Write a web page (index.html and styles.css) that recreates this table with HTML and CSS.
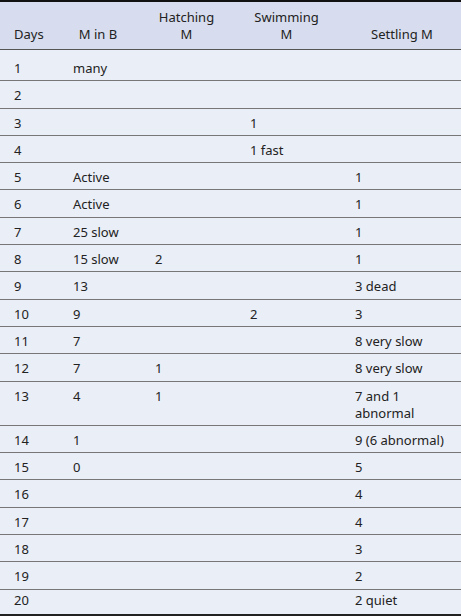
FILE: index.html
```html
<!DOCTYPE html>
<html>
<head>
<meta charset="utf-8">
<link rel="stylesheet" href="styles.css">
</head>
<body>
<table class="data">
  <colgroup>
    <col class="c1"><col class="c2"><col class="c3"><col class="c4"><col class="c5">
  </colgroup>
  <thead>
    <tr><th>Days</th><th>M in B</th><th>Hatching M</th><th>Swimming M</th><th>Settling M</th></tr>
  </thead>
  <tbody>
    <tr class="first"><td>1</td><td>many</td><td></td><td></td><td></td></tr>
    <tr><td>2</td><td></td><td></td><td></td><td></td></tr>
    <tr><td>3</td><td></td><td></td><td>1</td><td></td></tr>
    <tr><td>4</td><td></td><td></td><td>1 fast</td><td></td></tr>
    <tr><td>5</td><td>Active</td><td></td><td></td><td>1</td></tr>
    <tr><td>6</td><td>Active</td><td></td><td></td><td>1</td></tr>
    <tr><td>7</td><td>25 slow</td><td></td><td></td><td>1</td></tr>
    <tr><td>8</td><td>15 slow</td><td>2</td><td></td><td>1</td></tr>
    <tr><td>9</td><td>13</td><td></td><td></td><td>3 dead</td></tr>
    <tr><td>10</td><td>9</td><td></td><td>2</td><td>3</td></tr>
    <tr><td>11</td><td>7</td><td></td><td></td><td>8 very slow</td></tr>
    <tr><td>12</td><td>7</td><td>1</td><td></td><td>8 very slow</td></tr>
    <tr><td>13</td><td>4</td><td>1</td><td></td><td>7 and 1 abnormal</td></tr>
    <tr><td>14</td><td>1</td><td></td><td></td><td>9 (6 abnormal)</td></tr>
    <tr><td>15</td><td>0</td><td></td><td></td><td>5</td></tr>
    <tr><td>16</td><td></td><td></td><td></td><td>4</td></tr>
    <tr><td>17</td><td></td><td></td><td></td><td>4</td></tr>
    <tr><td>18</td><td></td><td></td><td></td><td>3</td></tr>
    <tr><td>19</td><td></td><td></td><td></td><td>2</td></tr>
    <tr class="last"><td>20</td><td></td><td></td><td></td><td>2 quiet</td></tr>
  </tbody>
</table>
</body>
</html>
```

FILE: styles.css
```css
html, body {
  margin: 0;
  padding: 0;
  background: #eaeef7;
}
.data {
  width: 461px;
  border-collapse: collapse;
  table-layout: fixed;
  font-family: "Noto Sans", sans-serif;
  font-size: 13px;
  line-height: 17px;
  color: #222;
  background: #eaeef7;
  border-top: 2px solid #111;
  border-bottom: 2px solid #222;
}
.c1 { width: 57px; }
.c2 { width: 82px; }
.c3 { width: 95px; }
.c4 { width: 105px; }
.c5 { width: 122px; }
.data th {
  background: #d7ddee;
  font-weight: normal;
  text-align: center;
  vertical-align: bottom;
  padding: 7px 16px 6px 16px;
  border-bottom: 1px solid #555;
}
.data td {
  text-align: left;
  vertical-align: top;
  padding: 6px 16px 3.3px 16px;
  border-bottom: 1px solid #777;
}
.data th:first-child, .data td:first-child {
  padding-left: 14px;
  padding-right: 16px;
}
.data th:last-child, .data td:last-child {
  padding-right: 12px;
}
.data tr.first td {
  padding-top: 10px;
}
.data tr.last td {
  padding-top: 2px;
  padding-bottom: 5px;
  border-bottom: none;
}
```
